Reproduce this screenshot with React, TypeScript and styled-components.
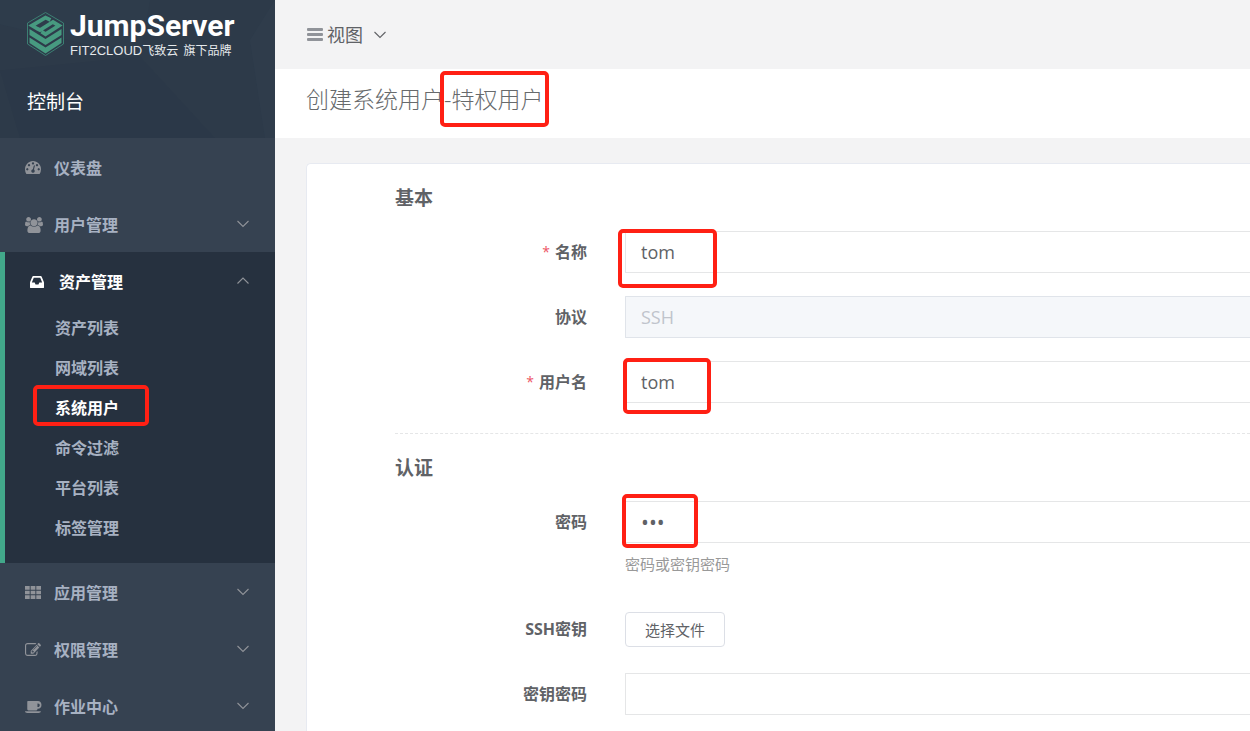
import React from "react";
import styled, { createGlobalStyle, css } from "styled-components";

const GlobalStyle = createGlobalStyle`
  *, *::before, *::after { box-sizing: border-box; }
  body {
    margin: 0;
    background: #f3f3f4;
    color: #606266;
    font-family: "Open Sans", "Noto Sans CJK SC", sans-serif;
    font-size: 16px;
  }
  button, input { font-family: inherit; }
`;

const Shell = styled.div`
  display: flex;
  height: 100vh;
  overflow: hidden;
`;

/* ---------- Sidebar ---------- */

const Sidebar = styled.aside`
  flex: 0 0 275px;
  overflow-y: auto;
  scrollbar-width: none;
  background: #364251;
`;

const Brand = styled.header`
  position: relative;
  height: 138px;
  padding: 10px 27px 0;
  background: #2d3a49;
  color: #fff;
`;

const Facets = styled.svg`
  position: absolute;
  inset: 0;
  width: 100%;
  height: 100%;
`;

const LogoLink = styled.a`
  position: relative;
  display: flex;
  align-items: center;
  gap: 5px;
  height: 48px;
  color: inherit;
  text-decoration: none;
  white-space: nowrap;
`;

const LogoText = styled.span`
  display: flex;
  flex-direction: column;
`;

const LogoName = styled.span`
  font: 700 30px/32px Roboto, sans-serif;
`;

const LogoOwner = styled.span`
  font: 13px/16px "Liberation Sans", sans-serif;
  color: #e6e9ec;
`;

const LogoOwnerCjk = styled.span`
  font: 12px/16px "Noto Sans CJK SC", sans-serif;
`;

const ConsoleTitle = styled.h1`
  position: relative;
  margin: 30px 0 0;
  font-size: 19px;
  line-height: 28px;
  font-weight: 400;
`;

const NavGroup = styled.div<{ $open?: boolean }>`
  ${(p) =>
    p.$open &&
    css`
      padding-bottom: 15px;
      border-left: 5px solid #42a88a;
      background: #26313f;
    `}
`;

const NavButton = styled.button<{ $open?: boolean }>`
  display: flex;
  align-items: center;
  width: 100%;
  height: 57px;
  padding: 0 26px 0 25px;
  border: 0;
  background: none;
  color: ${(p) => (p.$open ? "#fff" : "#a7b1c2")};
  font-size: 16px;
  font-weight: 700;
  text-align: left;
  cursor: pointer;
`;

const NavIcon = styled.span<{ $open?: boolean }>`
  display: flex;
  flex: 0 0 29px;
  padding-top: 2px;
  color: ${(p) => (p.$open ? "#fff" : "#909399")};
`;

const NavLabel = styled.span`
  flex: 1;
`;

const SubMenu = styled.ul`
  margin: -1px 0 0;
  padding: 0;
  list-style: none;
`;

const SubItem = styled.li`
  position: relative;
`;

const SubLink = styled.a<{ $current?: boolean }>`
  display: block;
  padding-left: 50px;
  line-height: 40px;
  font-weight: 700;
  color: ${(p) => (p.$current ? "#fff" : "#a7b1c2")};
  text-decoration: none;
`;

/* ---------- Main area ---------- */

const Main = styled.main`
  flex: 1;
  min-width: 0;
  display: flex;
  flex-direction: column;
`;

const TopBar = styled.div`
  flex: 0 0 69px;
  display: flex;
  align-items: center;
  padding-left: 32px;
`;

const ViewButton = styled.button`
  display: flex;
  align-items: center;
  padding: 0;
  border: 0;
  background: none;
  color: #606266;
  font-size: 18px;
  line-height: 28px;
  cursor: pointer;
`;

const ViewLabel = styled.span`
  margin: 0 11px 0 4px;
`;

const TitleBar = styled.div`
  flex: 0 0 69px;
  padding: 14px 0 0 31px;
  background: #fff;
`;

const PageTitle = styled.h2`
  margin: 0;
  font-size: 23px;
  line-height: 32px;
  font-weight: 300;
  color: #676a6c;
`;

const Anchor = styled.span`
  position: relative;
`;

const Card = styled.form`
  flex: 1;
  margin: 25px 0 0 31px;
  padding: 20px 0 0 88px;
  border: solid #e7eaf1;
  border-width: 1px 0 0 1px;
  border-radius: 5px 0 0 0;
  background: #fff;
`;

const Section = styled.section`
  & + & {
    margin-top: 30px;
    padding-top: 20px;
    border-top: 1px dashed #e5e6e7;
  }
`;

const SectionTitle = styled.h3`
  margin: 0 0 18px;
  font-size: 19px;
  line-height: 29px;
  font-weight: 700;
  color: #606266;
`;

const Row = styled.div`
  position: relative;
  display: grid;
  grid-template-columns: 192px 1fr;
  column-gap: 38px;
  & + & {
    margin-top: 23px;
  }
`;

const RowLabel = styled.label<{ $required?: boolean }>`
  display: flex;
  align-items: center;
  justify-content: flex-end;
  gap: 5px;
  height: 42px;
  line-height: 24px;
  font-weight: 700;
  color: #606266;
  ${(p) =>
    p.$required &&
    css`
      &::before {
        content: "*";
        font-weight: 400;
        font-size: 14px;
        color: #ed5565;
      }
    `}
`;

const TextInput = styled.input`
  display: block;
  width: 100%;
  height: 42px;
  padding: 0 15px;
  border: 1px solid #e5e6e7;
  border-right: 0;
  border-radius: 1px 0 0 1px;
  outline: 0;
  background: #fff;
  color: #606266;
  font-size: 18px;
  &[type="password"] {
    font-size: 21px;
  }
  &:disabled {
    border-color: #e0e4ea;
    background: #f5f7fa;
    color: #c0c4cc;
  }
`;

const Hint = styled.p`
  margin: 8px 0;
  font-size: 15px;
  line-height: 26px;
  color: #999;
`;

const FileButton = styled.button`
  width: 100px;
  height: 35px;
  margin: 4px 0 2px;
  padding: 0;
  border: 1px solid #dcdfe6;
  border-radius: 4px;
  background: #fff;
  color: #606266;
  font-size: 15px;
  cursor: pointer;
`;

/* Red marker drawn over the item it points out */
const Marker = styled.span<{ $left: number; $top: number; $width: number; $height: number }>`
  position: absolute;
  left: ${(p) => p.$left}px;
  top: ${(p) => p.$top}px;
  width: ${(p) => p.$width}px;
  height: ${(p) => p.$height}px;
  border: 4px solid #ff2014;
  border-radius: 5px;
  pointer-events: none;
`;

/* ---------- Icons ---------- */

type Glyph = { box: string; width: number; height: number; d: string };

const glyphs: Record<string, Glyph> = {
  gauge: {
    box: "0 256 1792 1408",
    width: 16,
    height: 13,
    d: "M384 1152q0-53-37.5-90.5t-90.5-37.5-90.5 37.5-37.5 90.5 37.5 90.5 90.5 37.5 90.5-37.5 37.5-90.5zm192-448q0-53-37.5-90.5t-90.5-37.5-90.5 37.5-37.5 90.5 37.5 90.5 90.5 37.5 90.5-37.5 37.5-90.5zm428 481l101-382q6-26-7.5-48.5t-38.5-29.5-48 6.5-30 39.5l-101 382q-60 5-107 43.5t-63 98.5q-20 77 20 146t117 89 146-20 89-117q16-60-6-117t-72-91zm660-33q0-53-37.5-90.5t-90.5-37.5-90.5 37.5-37.5 90.5 37.5 90.5 90.5 37.5 90.5-37.5 37.5-90.5zm-640-640q0-53-37.5-90.5t-90.5-37.5-90.5 37.5-37.5 90.5 37.5 90.5 90.5 37.5 90.5-37.5 37.5-90.5zm448 192q0-53-37.5-90.5t-90.5-37.5-90.5 37.5-37.5 90.5 37.5 90.5 90.5 37.5 90.5-37.5 37.5-90.5zm320 448q0 261-141 483-19 29-54 29h-1402q-35 0-54-29-141-221-141-483 0-182 71-348t191-286 286-191 348-71 348 71 286 191 191 286 71 348z",
  },
  users: {
    box: "0 0 1920 1792",
    width: 18,
    height: 16,
    d: "M593 896q-162 5-265 128h-134q-82 0-138-40.5t-56-118.5q0-353 124-353 6 0 43.5 21t97.5 42.5 119 21.5q67 0 133-23-5 37-5 66 0 139 81 256zm1071 637q0 120-73 189.5t-194 69.5h-874q-121 0-194-69.5t-73-189.5q0-53 3.5-103.5t14-109 26.5-108.5 43-97.5 62-81 85.5-53.5 111.5-20q10 0 43 21.5t73 48 107 48 135 21.5 135-21.5 107-48 73-48 43-21.5q61 0 111.5 20t85.5 53.5 62 81 43 97.5 26.5 108.5 14 109 3.5 103.5zm-1024-1277q0 106-75 181t-181 75-181-75-75-181 75-181 181-75 181 75 75 181zm704 384q0 159-112.5 271.5t-271.5 112.5-271.5-112.5-112.5-271.5 112.5-271.5 271.5-112.5 271.5 112.5 112.5 271.5zm576 225q0 78-56 118.5t-138 40.5h-134q-103-123-265-128 81-117 81-256 0-29-5-66 66 23 133 23 59 0 119-21.5t97.5-42.5 43.5-21q124 0 124 353zm-128-609q0 106-75 181t-181 75-181-75-75-181 75-181 181-75 181 75 75 181z",
  },
  inbox: {
    box: "128 256 1536 1280",
    width: 14,
    height: 12,
    d: "M1151 960h316q-1-3-2.5-8.5t-2.5-7.5l-212-496h-708l-212 496q-1 3-2.5 8.5t-2.5 7.5h316l95 192h320zm513 30v482q0 26-19 45t-45 19h-1408q-26 0-45-19t-19-45v-482q0-62 25-123l238-552q10-25 36.5-42t52.5-17h832q26 0 52.5 17t36.5 42l238 552q25 61 25 123z",
  },
  grid: {
    box: "0 0 16 13",
    width: 16,
    height: 13,
    d: "M0 0h4.700v3.700h-4.700zM5.650 0h4.700v3.700h-4.700zM11.300 0h4.700v3.700h-4.700zM0 4.650h4.700v3.700h-4.700zM5.650 4.650h4.700v3.700h-4.700zM11.300 4.650h4.700v3.700h-4.700zM0 9.300h4.700v3.700h-4.700zM5.650 9.300h4.700v3.700h-4.700zM11.300 9.300h4.700v3.700h-4.700z",
  },
  edit: {
    box: "0 128 1792 1408",
    width: 16,
    height: 13,
    d: "M888 1184l116-116-152-152-116 116v56h96v96h56zm440-720q-16-16-33 1l-350 350q-17 17-1 33t33-1l350-350q17-17 1-33zm80 594v190q0 119-84.5 203.5t-203.5 84.5h-832q-119 0-203.500-84.500t-84.500-203.500v-832q0-119 84.500-203.500t203.500-84.500h832q63 0 117 25 15 7 18 23 3 17-9 29l-49 49q-14 14-32 8-23-6-45-6h-832q-66 0-113 47t-47 113v832q0 66 47 113t113 47h832q66 0 113-47t47-113v-126q0-13 9-22l64-64q15-15 35-7t20 29zm-96-738l288 288-672 672h-288v-288zm444 132l-92 92-288-288 92-92q28-28 68-28t68 28l152 152q28 28 28 68t-28 68z",
  },
  cup: {
    box: "0 384 1920 1280",
    width: 17,
    height: 12,
    d: "M1664 832q0-80-56-136t-136-56h-64v384h64q80 0 136-56t56-136zm-1664 640h1792q0 106-75 149t-181 43h-1280q-106 0-181-43t-75-149zm1856-640q0 159-112.5 271.5t-271.5 112.5h-64v32q0 92-66 124t-158 32h-704q-92 0-158-32t-66-124v-800q0-26 19-45t45-19h1152q159 0 271.5 112.5t112.5 271.5z",
  },
};

function GlyphIcon({ name }: { name: string }) {
  const g = glyphs[name];
  return (
    <svg width={g.width} height={g.height} viewBox={g.box} preserveAspectRatio="none" fill="currentColor" aria-hidden="true">
      <path d={g.d} />
    </svg>
  );
}

function Chevron({ up, color = "#909399" }: { up?: boolean; color?: string }) {
  return (
    <svg width="12" height="8" viewBox="0 0 12 8" fill="none" stroke={color} strokeWidth="1.1" aria-hidden="true">
      <path d={up ? "M.5 6.500 6 1l5.500 5.500" : "M.5 1 6 6.500 11.500 1"} />
    </svg>
  );
}

function Logo() {
  return (
    <svg width="38" height="46" viewBox="0 0 38 46" aria-hidden="true">
      <path d="M18.500 1.500 36.500 12v21L18.500 44.500.5 33V12Z" fill="none" stroke="#3c7f73" strokeWidth="1" />
      <path d="M23.500 9 18.500 6.600 5 14.600l5.500 3.200 2.500 1.200L26 11l6 3.600-13.500 8.600-4-2.500" fill="none" stroke="#479a80" strokeWidth="3.800" />
      <g fill="#479a80">
        <path d="M2.500 18 18.500 28 34.500 18v6L18.500 34 2.500 24Z" />
        <path d="M2.500 26.500 18.500 36.500 34.500 26.500v5.500L18.500 42.500 2.500 32Z" />
      </g>
    </svg>
  );
}

/* ---------- Content ---------- */

type Group = { label: string; icon: string; leaf?: boolean; children?: string[] };

const groups: Group[] = [
  { label: "仪表盘", icon: "gauge", leaf: true },
  { label: "用户管理", icon: "users" },
  {
    label: "资产管理",
    icon: "inbox",
    children: ["资产列表", "网域列表", "系统用户", "命令过滤", "平台列表", "标签管理"],
  },
  { label: "应用管理", icon: "grid" },
  { label: "权限管理", icon: "edit" },
  { label: "作业中心", icon: "cup" },
];

const currentPage = "系统用户";

export default function App() {
  return (
    <>
      <GlobalStyle />
      <Shell>
        <Sidebar>
          <Brand>
            <Facets viewBox="0 0 275 137" preserveAspectRatio="none" aria-hidden="true">
              <path d="M0 0h150l-10 56L0 24Z" fill="#30404f" opacity=".4" />
              <path d="M140 56 215 137H20L0 70Z" fill="#293646" opacity=".3" />
              <path d="M275 0v137h-10L250 40Z" fill="#31404f" opacity=".4" />
            </Facets>
            <LogoLink href="#">
              <Logo />
              <LogoText>
                <LogoName>JumpServer</LogoName>
                <LogoOwner>
                  FIT2CLOUD<LogoOwnerCjk>飞致云&nbsp; 旗下品牌</LogoOwnerCjk>
                </LogoOwner>
              </LogoText>
            </LogoLink>
            <ConsoleTitle>控制台</ConsoleTitle>
          </Brand>
          <nav>
            {groups.map((g) => {
              const open = !!g.children;
              return (
                <NavGroup key={g.label} $open={open}>
                  <NavButton type="button" $open={open} aria-expanded={g.leaf ? undefined : open}>
                    <NavIcon $open={open}>
                      <GlyphIcon name={g.icon} />
                    </NavIcon>
                    <NavLabel>{g.label}</NavLabel>
                    {!g.leaf && <Chevron up={open} />}
                  </NavButton>
                  {g.children && (
                    <SubMenu>
                      {g.children.map((c) => (
                        <SubItem key={c}>
                          <SubLink href="#" $current={c === currentPage}>
                            {c}
                          </SubLink>
                          {c === currentPage && <Marker $left={28} $top={-3} $width={116} $height={41} />}
                        </SubItem>
                      ))}
                    </SubMenu>
                  )}
                </NavGroup>
              );
            })}
          </nav>
        </Sidebar>

        <Main>
          <TopBar>
            <ViewButton type="button">
              <svg width="16" height="13" viewBox="0 0 16 13" fill="#909399" aria-hidden="true">
                <rect width="16" height="3" rx="1" />
                <rect y="5" width="16" height="3" rx="1" />
                <rect y="10" width="16" height="3" rx="1" />
              </svg>
              <ViewLabel>视图</ViewLabel>
              <Chevron color="#606266" />
            </ViewButton>
          </TopBar>
          <TitleBar>
            <PageTitle>
              创建系统用户-
              <Anchor>
                特权用户
                <Marker $left={-11} $top={-12} $width={109} $height={56} />
              </Anchor>
            </PageTitle>
          </TitleBar>

          <Card onSubmit={(e) => e.preventDefault()}>
            <Section>
              <SectionTitle>基本</SectionTitle>
              <Row>
                <RowLabel htmlFor="name" $required>
                  名称
                </RowLabel>
                <TextInput id="name" defaultValue="tom" />
                <Marker $left={223} $top={-2} $width={99} $height={59} />
              </Row>
              <Row>
                <RowLabel htmlFor="protocol">协议</RowLabel>
                <TextInput id="protocol" defaultValue="SSH" disabled />
              </Row>
              <Row>
                <RowLabel htmlFor="username" $required>
                  用户名
                </RowLabel>
                <TextInput id="username" defaultValue="tom" />
                <Marker $left={228} $top={-3} $width={88} $height={56} />
              </Row>
            </Section>
            <Section>
              <SectionTitle>认证</SectionTitle>
              <Row>
                <RowLabel htmlFor="password">密码</RowLabel>
                <div>
                  <TextInput id="password" type="password" defaultValue="tom" />
                  <Hint>密码或密钥密码</Hint>
                </div>
                <Marker $left={227} $top={-7} $width={76} $height={54} />
              </Row>
              <Row>
                <RowLabel htmlFor="key-file">SSH密钥</RowLabel>
                <div>
                  <FileButton id="key-file" type="button">
                    选择文件
                  </FileButton>
                </div>
              </Row>
              <Row>
                <RowLabel htmlFor="passphrase">密钥密码</RowLabel>
                <TextInput id="passphrase" type="password" />
              </Row>
            </Section>
          </Card>
        </Main>
      </Shell>
    </>
  );
}
